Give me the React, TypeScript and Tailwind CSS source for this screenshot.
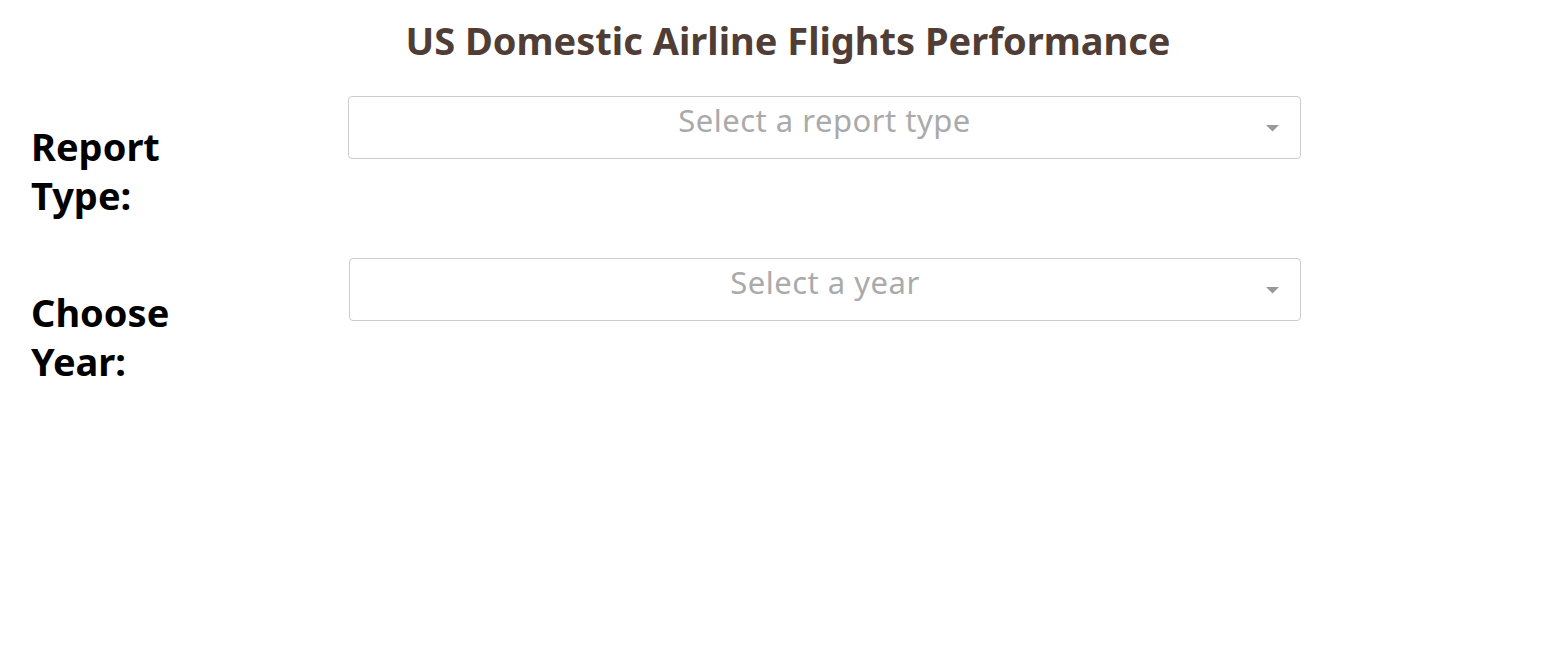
import React from "react";

function Caret() {
  return (
    <svg width="13" height="7" viewBox="0 0 13 7" className="block">
      <path d="M0 0 L13 0 L6.5 6.5 Z" fill="#999999" />
    </svg>
  );
}

export default function App() {
  return (
    <div className="w-[1557px] h-[664px] bg-white" style={{ fontFamily: '"Noto Sans", "Open Sans", sans-serif' }}>
      <h1 className="pt-[20px] pl-[19px] text-center text-[38px] leading-[40px] font-bold text-[#503D36]">
        US Domestic Airline Flights Performance
      </h1>
      <div className="mt-[36px] flex flex-col gap-[38px]">
        <div className="flex items-start">
          <div className="w-[348px] shrink-0 pl-[31px] pt-[26px]">
            <h2 className="w-[200px] text-[38px] leading-[49px] font-bold text-black">Report Type:</h2>
          </div>
          <div className="relative w-[953px] h-[63px] border border-[#cccccc] rounded-[4px] bg-white shrink-0">
            <div className="pt-[6px] text-center text-[31px] leading-[34px] tracking-[0.5px] text-[#aaaaaa]">
              Select a report type
            </div>
            <div className="absolute right-[21px] top-[28px]">
              <Caret />
            </div>
          </div>
        </div>
        <div className="flex items-start">
          <div className="w-[349px] shrink-0 pl-[31px] pt-[30px]">
            <h2 className="w-[200px] text-[38px] leading-[49px] font-bold text-black">Choose Year:</h2>
          </div>
          <div className="relative w-[952px] h-[63px] border border-[#cccccc] rounded-[4px] bg-white shrink-0">
            <div className="pt-[6px] text-center text-[31px] leading-[34px] tracking-[0.5px] text-[#aaaaaa]">
              Select a year
            </div>
            <div className="absolute right-[21px] top-[28px]">
              <Caret />
            </div>
          </div>
        </div>
      </div>
    </div>
  );
}
